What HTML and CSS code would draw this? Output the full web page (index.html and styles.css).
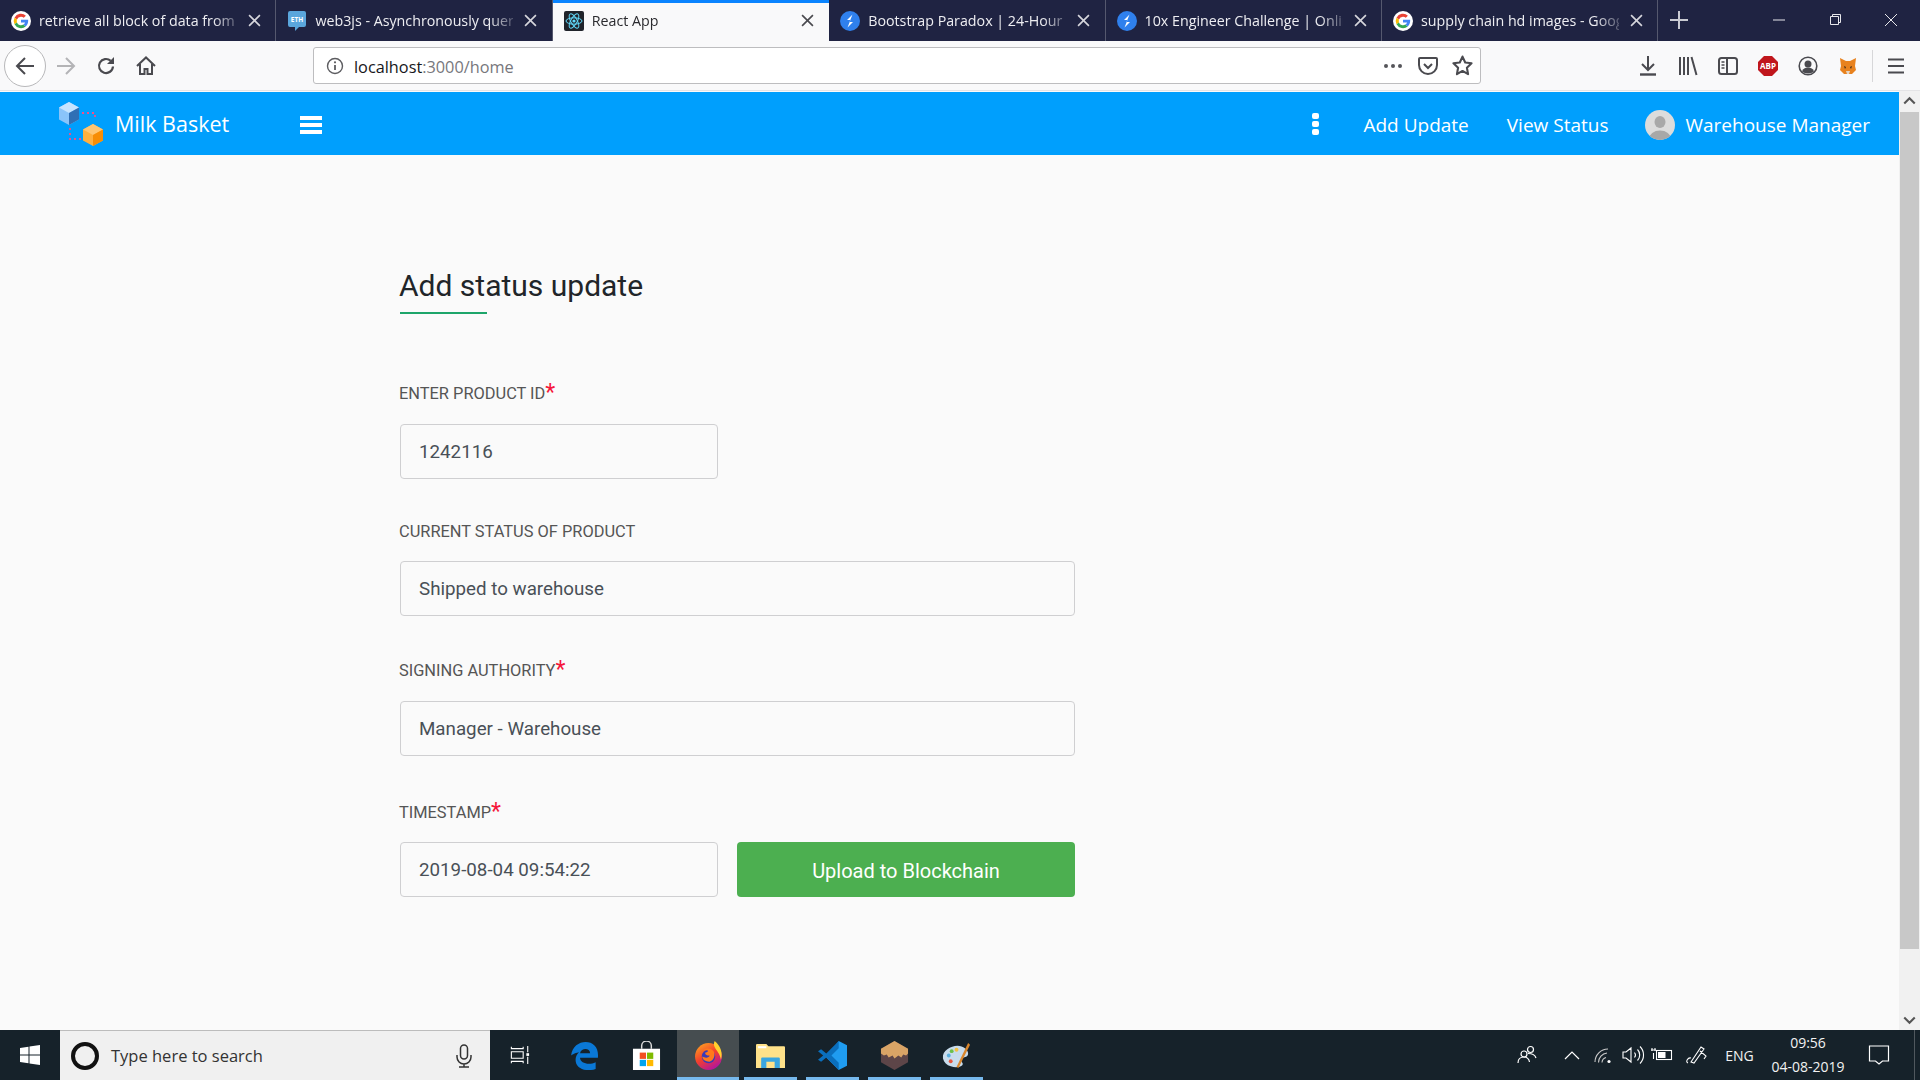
FILE: index.html
```html
<!DOCTYPE html>
<html lang="en">
    <head>
        <meta charset="UTF-8" />
        <meta name="viewport" content="width=device-width, initial-scale=1.0" />
        <title>React App</title>
        <link rel="stylesheet" href="styles.css">
    </head>
    <body>
        <svg class="defs" width="0" height="0">
            <symbol id="g-logo" viewBox="0 0 24 24">
                <circle cx="12" cy="12" r="12" fill="#fff"/>
                <path d="M12 7a5 5 0 0 1 3.3 1.2l2.6-2.6A8.8 8.8 0 0 0 4.2 8l3 2.300A5 5 0 0 1 12 7z" fill="#ea4335"/>
                <path d="M4.200 8a8.800 8.800 0 0 0 0 8l3-2.300a5 5 0 0 1 0-3.400z" fill="#fbbc05"/>
                <path d="M4.200 16a8.800 8.800 0 0 0 13.500 2.600l-2.900-2.300A5 5 0 0 1 7.200 13.700z" fill="#34a853"/>
                <path d="M20.600 10.400H12v3.500h4.900a4.300 4.300 0 0 1-2.100 2.400l2.900 2.300c1.800-1.700 2.900-4.100 2.900-6.900 0-.5 0-1.200 0-1.300z" fill="#4285f4"/>
            </symbol>
            <symbol id="bolt" viewBox="0 0 20 20">
                <circle cx="10" cy="10" r="10" fill="#2f80ed"/>
                <path d="M12.500 3.500 7 9h3.500L7.500 16.500 13 11H9.500z" fill="#fff"/>
            </symbol>
            <symbol id="close" viewBox="0 0 12 12">
                <path d="M1 1l10 10M11 1 1 11" fill="none" stroke="currentColor" stroke-width="1.500"/>
            </symbol>
        </svg>

        <div class="tabbar">
            <div class="tab">
                <svg class="favicon"><use href="#g-logo"/></svg>
                <span class="tab-title">retrieve all block of data from</span>
                <svg class="tab-close"><use href="#close"/></svg>
            </div>
            <div class="tab">
                <svg class="favicon" viewBox="0 0 18 20">
                    <path d="M2 0h14a2 2 0 0 1 2 2v12a2 2 0 0 1-2 2h-5l-4 4v-4H2a2 2 0 0 1-2-2V2a2 2 0 0 1 2-2z" fill="#5aa6dc"/>
                    <text x="9" y="10.500" class="eth-text" text-anchor="middle">ETH</text>
                </svg>
                <span class="tab-title">web3js - Asynchronously query</span>
                <svg class="tab-close"><use href="#close"/></svg>
            </div>
            <div class="tab tab-active">
                <svg class="favicon" viewBox="0 0 20 20">
                    <rect width="20" height="20" rx="2" fill="#20232a"/>
                    <g fill="none" stroke="#61dafb" stroke-width="1">
                        <ellipse cx="10" cy="10" rx="8" ry="3.200"/>
                        <ellipse cx="10" cy="10" rx="8" ry="3.200" transform="rotate(60 10 10)"/>
                        <ellipse cx="10" cy="10" rx="8" ry="3.200" transform="rotate(120 10 10)"/>
                    </g>
                    <circle cx="10" cy="10" r="1.600" fill="#61dafb"/>
                </svg>
                <span class="tab-title">React App</span>
                <svg class="tab-close"><use href="#close"/></svg>
            </div>
            <div class="tab">
                <svg class="favicon"><use href="#bolt"/></svg>
                <span class="tab-title">Bootstrap Paradox | 24-Hour H</span>
                <svg class="tab-close"><use href="#close"/></svg>
            </div>
            <div class="tab">
                <svg class="favicon"><use href="#bolt"/></svg>
                <span class="tab-title">10x Engineer Challenge | Onlin</span>
                <svg class="tab-close"><use href="#close"/></svg>
            </div>
            <div class="tab">
                <svg class="favicon"><use href="#g-logo"/></svg>
                <span class="tab-title">supply chain hd images - Goog</span>
                <svg class="tab-close"><use href="#close"/></svg>
            </div>
            <svg class="new-tab" viewBox="0 0 18 18"><path d="M9 0v18M0 9h18" stroke="#c9cad2" stroke-width="2"/></svg>
            <div class="win-btns">
                <svg class="win-btn" viewBox="0 0 46 14"><path d="M17 7h12" stroke="#e8e8ec" stroke-width="1"/></svg>
                <svg class="win-btn" viewBox="0 0 46 14"><path d="M18.500 3.500h8v8h-8zM20.500 3.500v-2h8v8h-2" fill="none" stroke="#e8e8ec" stroke-width="1"/></svg>
                <svg class="win-btn" viewBox="0 0 46 14"><path d="M17 1l12 12M29 1 17 13" stroke="#e8e8ec" stroke-width="1"/></svg>
            </div>
        </div>

        <div class="toolbar">
            <div class="back-btn">
                <svg class="tool-icon" viewBox="0 0 20 20"><path d="M19 10H2M10 2l-8 8 8 8" fill="none" stroke="#4a4a4f" stroke-width="2"/></svg>
            </div>
            <div class="tool-slot">
                <svg class="tool-icon" viewBox="0 0 20 20"><path d="M1 10h17M10 2l8 8-8 8" fill="none" stroke="#b4b4b6" stroke-width="2"/></svg>
            </div>
            <div class="tool-slot">
                <svg class="tool-icon" viewBox="0 0 20 20"><path d="M17 10.500a7 7 0 1 1-2.300-5.700" fill="none" stroke="#4a4a4f" stroke-width="2.200"/><path d="M18 1v7h-7z" fill="#4a4a4f"/></svg>
            </div>
            <div class="tool-slot">
                <svg class="tool-icon" viewBox="0 0 20 20"><path d="M1 10 10 1.500 19 10M4 8v10h4.500v-5h3v5H16V8" fill="none" stroke="#4a4a4f" stroke-width="2"/></svg>
            </div>
            <div class="urlbar">
                <svg class="url-info" viewBox="0 0 18 18"><circle cx="9" cy="9" r="7.500" fill="none" stroke="#5c5c60" stroke-width="1.400"/><path d="M9 8v5" stroke="#5c5c60" stroke-width="1.800"/><circle cx="9" cy="5.300" r="1.100" fill="#5c5c60"/></svg>
                <span class="url-text">localhost<span class="url-dim">:3000/home</span></span>
                <svg class="url-dots" viewBox="0 0 20 6"><circle cx="3" cy="3" r="2" fill="#55555a"/><circle cx="10" cy="3" r="2" fill="#55555a"/><circle cx="17" cy="3" r="2" fill="#55555a"/></svg>
                <svg class="url-pocket" viewBox="0 0 20 20"><path d="M2 2h16a1 1 0 0 1 1 1v6a9 9 0 0 1-18 0V3a1 1 0 0 1 1-1z" fill="none" stroke="#4a4a4f" stroke-width="2"/><path d="M6 8l4 4 4-4" fill="none" stroke="#4a4a4f" stroke-width="2"/></svg>
                <svg class="url-star" viewBox="0 0 20 20"><path d="M10 1.500l2.600 5.600 6 .8-4.400 4.200 1.100 6.100-5.300-3-5.300 3 1.100-6.100L1.400 7.900l6-.8z" fill="none" stroke="#4a4a4f" stroke-width="2" stroke-linejoin="round"/></svg>
            </div>
            <div class="tool-right">
                <div class="tool-slot">
                    <svg class="tool-icon" viewBox="0 0 20 20"><path d="M10 0v13M4 8l6 6 6-6" fill="none" stroke="#4a4a4f" stroke-width="2"/><path d="M2 18.500h16" stroke="#4a4a4f" stroke-width="2.400"/></svg>
                </div>
                <div class="tool-slot">
                    <svg class="tool-icon" viewBox="0 0 20 20"><path d="M2 1v18M6 1v18M10 1v18M13.500 1l5 18" fill="none" stroke="#4a4a4f" stroke-width="2"/></svg>
                </div>
                <div class="tool-slot">
                    <svg class="tool-icon" viewBox="0 0 20 20"><rect x="1" y="2" width="18" height="16" rx="2.500" fill="none" stroke="#4a4a4f" stroke-width="2"/><path d="M9 2v16" stroke="#4a4a4f" stroke-width="2"/><path d="M3.500 6h3M3.500 9h3M3.500 12h3" stroke="#4a4a4f" stroke-width="1.400"/></svg>
                </div>
                <div class="tool-slot">
                    <svg class="tool-icon" viewBox="0 0 20 20">
                        <path d="M6 0h8l6 6v8l-6 6H6l-6-6V6z" fill="#c0161c"/>
                        <text x="10" y="13" class="abp-text" text-anchor="middle">ABP</text>
                    </svg>
                </div>
                <div class="tool-slot">
                    <svg class="tool-icon" viewBox="0 0 20 20"><circle cx="10" cy="10" r="8.800" fill="none" stroke="#4a4a4f" stroke-width="1.600"/><circle cx="10" cy="8" r="3.500" fill="#4a4a4f"/><path d="M4 15.500c1-3 3-4 6-4s5 1 6 4c-3 2.500-9 2.500-12 0z" fill="#4a4a4f"/></svg>
                </div>
                <div class="tool-slot">
                    <svg class="tool-icon" viewBox="0 0 20 20">
                        <path d="M2 2l6 3h4l6-3-1 8 1 4-4 4h-8l-4-4 1-4z" fill="#e8821e"/>
                        <path d="M6 10l2 1-1 2zM14 10l-2 1 1 2z" fill="#3a2a1a"/>
                        <path d="M8 15h4l-1 3H9z" fill="#e4d5c4"/>
                    </svg>
                </div>
                <span class="tool-sep"></span>
                <div class="tool-slot">
                    <svg class="tool-icon" viewBox="0 0 20 20"><path d="M2 3.500h16M2 10h16M2 16.500h16" stroke="#4a4a4f" stroke-width="2.200"/></svg>
                </div>
            </div>
        </div>

        <div class="viewport">
            <div class="page">
                <nav class="navbar">
                    <svg class="logo" viewBox="0 0 45 44">
                        <path d="M10 0l10 5.500v12L10 23 0 17.500v-12z" fill="#8ac4fa"/>
                        <path d="M10 0l10 5.500L10 11 0 5.500z" fill="#c6e4ff"/>
                        <path d="M10 11l10-5.500v12L10 23z" fill="#2f6fb5"/>
                        <path d="M34 22l10 5.500v11L34 44l-10-5.500v-11z" fill="#ffb03f"/>
                        <path d="M34 22l10 5.500L34 33l-10-5.500z" fill="#ffc673"/>
                        <path d="M34 33l10-5.500v11L34 44z" fill="#f78d05"/>
                        <path d="M23 11h13v7M11 26v11h11" fill="none" stroke="#f0508a" stroke-width="1.800" stroke-dasharray="2 3"/>
                    </svg>
                    <span class="brand">Milk Basket</span>
                    <span class="burger"><i></i><i></i><i></i></span>
                    <span class="kebab"><i></i><i></i><i></i></span>
                    <a class="nav-link nav-add">Add Update</a>
                    <a class="nav-link nav-view">View Status</a>
                    <svg class="avatar" viewBox="0 0 30 30">
                        <defs><clipPath id="av"><ellipse cx="15" cy="15" rx="15" ry="15"/></clipPath></defs>
                        <circle cx="15" cy="15" r="15" fill="#dcdcdc"/>
                        <g clip-path="url(#av)" fill="#a8a8a8">
                            <ellipse cx="15" cy="12" rx="5.500" ry="6"/>
                            <ellipse cx="15" cy="29" rx="11" ry="8.500"/>
                        </g>
                    </svg>
                    <a class="nav-link">Warehouse Manager</a>
                </nav>

                <form class="status-form">
                    <h2 class="form-title">Add status update</h2>
                    <div class="title-rule"></div>

                    <label class="field-label label-id">ENTER PRODUCT ID<span class="req">*</span></label>
                    <input class="field field-short" type="text" value="1242116">

                    <label class="field-label label-status">CURRENT STATUS OF PRODUCT</label>
                    <input class="field" type="text" value="Shipped to warehouse">

                    <label class="field-label">SIGNING AUTHORITY<span class="req">*</span></label>
                    <input class="field" type="text" value="Manager - Warehouse">

                    <label class="field-label label-time">TIMESTAMP<span class="req">*</span></label>
                    <div class="field-row">
                        <input class="field field-short" type="text" value="2019-08-04 09:54:22">
                        <button class="upload-btn" type="button">Upload to Blockchain</button>
                    </div>
                </form>
            </div>

            <div class="scrollbar">
                <svg class="scroll-arrow" viewBox="0 0 20 20"><path d="M5 12l5-5 5 5" fill="none" stroke="#555" stroke-width="2"/></svg>
                <div class="scroll-track"><div class="scroll-thumb"></div></div>
                <svg class="scroll-arrow" viewBox="0 0 20 20"><path d="M5 8l5 5 5-5" fill="none" stroke="#555" stroke-width="2"/></svg>
            </div>
        </div>

        <div class="taskbar">
            <div class="start">
                <svg class="win-logo" viewBox="0 0 20 20"><path d="M0 3l8.500-1.200V9.500H0zM9.500 1.600 20 0v9.500H9.500zM0 10.500h8.500v7.700L0 17zM9.500 10.500H20V20L9.500 18.400z" fill="#fff"/></svg>
            </div>
            <div class="search">
                <span class="cortana"></span>
                <span class="search-text">Type here to search</span>
                <svg class="mic" viewBox="0 0 16 24"><rect x="4.500" y="1" width="7" height="14" rx="3.500" fill="none" stroke="#333" stroke-width="1.500"/><path d="M1 11v2a7 7 0 0 0 14 0v-2M8 20v3M3 23h10" fill="none" stroke="#333" stroke-width="1.500"/></svg>
            </div>
            <div class="task-view">
                <svg class="task-icon" viewBox="0 0 22 20"><path d="M1.500 1v2h13V1M1.500 19v-2h13v2M1.500 6.500h13v7h-13zM19.500 0v7M19.500 12v8" fill="none" stroke="#fff" stroke-width="1.200"/><rect x="18" y="8" width="3" height="3" fill="#fff"/></svg>
            </div>
            <div class="app">
                <svg class="app-icon" viewBox="0 0 26 26"><path d="M1 13C2 5 8 1 14 1c7 0 12 5 11 14H9c0 5 8 7 14 4v6c-8 3-18 0-18-8 0-3 1-5 3-7 0 0-5 1-7 3zm8-2h9c0-5-8-5-9 0z" fill="#0a78d6"/></svg>
            </div>
            <div class="app">
                <svg class="app-icon store-icon" viewBox="0 0 30 30">
                    <path d="M10 8V5a5 5 0 0 1 10 0v3" fill="none" stroke="#ddd" stroke-width="1.500"/>
                    <rect x="1" y="8" width="28" height="22" fill="#fff"/>
                    <rect x="8" y="12" width="6.500" height="6.500" fill="#f25022"/>
                    <rect x="15.500" y="12" width="6.500" height="6.500" fill="#7fba00"/>
                    <rect x="8" y="19.500" width="6.500" height="6.500" fill="#00a4ef"/>
                    <rect x="15.500" y="19.500" width="6.500" height="6.500" fill="#ffb900"/>
                </svg>
            </div>
            <div class="app app-active">
                <svg class="app-icon" viewBox="0 0 28 28">
                    <defs>
                        <linearGradient id="ff" x1="0" y1="0" x2="0.600" y2="1"><stop offset="0" stop-color="#ffb01f"/><stop offset="0.550" stop-color="#f3402c"/><stop offset="1" stop-color="#b5169a"/></linearGradient>
                    </defs>
                    <circle cx="14" cy="15" r="13" fill="url(#ff)"/>
                    <path d="M20 0c6 5 8 12 6 18-1-6-4-8-6-12-1-2-1-4 0-6z" fill="#ffd02e"/>
                    <circle cx="14" cy="15" r="6.500" fill="#3a3ab8"/>
                    <path d="M9 9c3-3 8-2 10 1 2 4 0 9-4 10-4 0-7-2-7-5 3 2 7 1 7-1-2 0-5-1-4-3 2 0 3-1 2-2-2 0-3 0-4 0z" fill="#ff7a1c"/>
                </svg>
            </div>
            <div class="app">
                <svg class="app-icon" viewBox="0 0 28 26">
                    <path d="M0 3a1 1 0 0 1 1-1h9l2 2h15a1 1 0 0 1 1 1v20H0z" fill="#ffe28a"/>
                    <path d="M2 4h8v2H2z" fill="#fff"/>
                    <path d="M5 25v-9a1 1 0 0 1 1-1h16a1 1 0 0 1 1 1v9h-5v-6h-8v6z" fill="#3aa6e0"/>
                </svg>
            </div>
            <div class="app">
                <svg class="app-icon" viewBox="0 0 28 28">
                    <path d="M20 0l8 4v20l-8 4L8 16l12-16z" fill="#1f9cf0"/>
                    <path d="M20 0 8 12 3 8 0 10l5 4-5 4 3 2 5-4 12 12v-7l-7-7 7-7z" fill="#0a6fbd"/>
                </svg>
            </div>
            <div class="app">
                <svg class="app-icon" viewBox="0 0 28 30">
                    <path d="M14 0l14 8v14l-14 8-14-8V8z" fill="#5d4548"/>
                    <path d="M14 0l14 8v5l-2 2-3-1-2 3-3-2-4 3-2-3-4 2-2-3-3 1-3-2V8z" fill="#d9a466"/>
                </svg>
            </div>
            <div class="app">
                <svg class="app-icon" viewBox="0 0 30 28">
                    <path d="M1 17C0 9 9 4 16 4c6 0 11 4 11 8 0 5-6 3-7 6s3 4 1 6-7 3-12 1c-4-1-7-4-8-8z" fill="#c8dcec"/>
                    <circle cx="7" cy="14" r="2" fill="#5ab0e0"/>
                    <circle cx="10" cy="9.500" r="2" fill="#6cc04a"/>
                    <circle cx="15" cy="8" r="2" fill="#f5c242"/>
                    <circle cx="9" cy="20" r="2" fill="#e8553d"/>
                    <path d="M27 1l2 2-12 24-2-1z" fill="#d9862c"/>
                </svg>
            </div>
            <div class="tray">
                <svg class="tray-people" viewBox="0 0 20 20"><circle cx="7" cy="9" r="3" fill="none" stroke="#fff" stroke-width="1.200"/><circle cx="13.500" cy="4.500" r="3" fill="none" stroke="#fff" stroke-width="1.200"/><path d="M1 18c0-4 2-6 6-6s5 2 5.500 5M11 8.500c4 0 7 1 8 4.500" fill="none" stroke="#fff" stroke-width="1.200"/></svg>
                <svg class="tray-slot tray-caret" viewBox="0 0 30 20"><path d="M8 14l7-7 7 7" fill="none" stroke="#fff" stroke-width="1.200"/></svg>
                <svg class="tray-slot" viewBox="0 0 30 20"><path d="M8 17A13 13 0 0 1 21 4M11.500 17.500A9.500 9.500 0 0 1 20 8M15 17.500a5.500 5.500 0 0 1 4-5" fill="none" stroke="#ccc" stroke-width="1.100"/><circle cx="22" cy="16.500" r="1.600" fill="#fff"/></svg>
                <svg class="tray-slot" viewBox="0 0 30 20"><path d="M6 7h3l5-4v14l-5-4H6zM17.500 7.500a4 4 0 0 1 0 5M20.500 4.500a8 8 0 0 1 0 11M23 1.500a12 12 0 0 1 0 17" fill="none" stroke="#fff" stroke-width="1.100"/></svg>
                <svg class="tray-slot" viewBox="0 0 30 20"><rect x="9.500" y="5.500" width="15" height="9" fill="none" stroke="#fff" stroke-width="1.100"/><rect x="11" y="7" width="7.500" height="6" fill="#fff"/><path d="M4 5h5M5 3v3M8 3v3M6.500 8v6" stroke="#fff" stroke-width="1.100" fill="none"/></svg>
                <svg class="tray-slot tray-pen" viewBox="0 0 30 20"><path d="M6 18c-3-1 0-6 3-5M9 17 19 2l3 2-10 14zM18 6l6 5-2 3" fill="none" stroke="#fff" stroke-width="1.100"/></svg>
                <span class="tray-lang">ENG</span>
                <div class="clock"><span>09:56</span><span>04-08-2019</span></div>
                <svg class="tray-notify" viewBox="0 0 22 20"><path d="M1.500 1h19v15h-6l-3.500 3-3.500-3h-6z" fill="none" stroke="#fff" stroke-width="1.200"/></svg>
                <span class="show-desktop"></span>
            </div>
        </div>
    </body>
</html>
```

FILE: styles.css
```css
html, body {
    margin: 0;
    height: 100%;
    overflow: hidden;
}
body {
    width: 1920px;
    height: 1080px;
    display: flex;
    flex-direction: column;
    background: #fafafa;
    font-family: Roboto, sans-serif;
}
.defs {
    position: absolute;
}

/* browser tabs */
.tabbar {
    height: 41px;
    display: flex;
    align-items: stretch;
    background: #1f2342;
    flex-shrink: 0;
}
.tab {
    width: 276.400px;
    box-sizing: border-box;
    border-right: 1px solid #55586e;
    display: flex;
    align-items: center;
    padding-left: 11px;
    color: #eeeef2;
    font: 14.250px "Open Sans", sans-serif;
}
.favicon {
    width: 20px;
    height: 20px;
    flex-shrink: 0;
}
.eth-text {
    font: bold 6.500px "Open Sans", sans-serif;
    fill: #fff;
}
.tab-title {
    width: 198px;
    margin-left: 8px;
    white-space: nowrap;
    -webkit-mask-image: linear-gradient(to right, #000 88%, rgba(0, 0, 0, 0.25));
    mask-image: linear-gradient(to right, #000 88%, rgba(0, 0, 0, 0.25));
}
.tab-close {
    width: 13px;
    height: 13px;
    margin-left: 11px;
    color: #d6d6dc;
}
.tab-active {
    background: #f9f9fa;
    color: #2a2a2e;
    border-right: 0;
    box-shadow: inset 0 3px #0a84ff;
}
.tab-active .tab-close {
    color: #4a4a4f;
}
.new-tab {
    width: 18px;
    height: 18px;
    margin: 11px 0 0 12px;
}
.win-btns {
    margin-left: auto;
    display: flex;
    padding-right: 1px;
}
.win-btn {
    width: 46px;
    height: 14px;
    margin: 13px 5px 0;
}

/* browser toolbar */
.toolbar {
    height: 50px;
    box-sizing: border-box;
    display: flex;
    align-items: center;
    background: #f9f9fa;
    padding-left: 4px;
    flex-shrink: 0;
    border-bottom: 1px solid #e4e4e6;
}
.back-btn {
    width: 40px;
    height: 40px;
    border: 1px solid #b8b8ba;
    border-radius: 50%;
    background: #fff;
    display: flex;
    align-items: center;
    justify-content: center;
}
.tool-slot {
    width: 40px;
    height: 40px;
    display: flex;
    align-items: center;
    justify-content: center;
}
.tool-icon {
    width: 20px;
    height: 20px;
}
.urlbar {
    width: 1168px;
    height: 37px;
    margin-left: 147px;
    box-sizing: border-box;
    border: 1px solid #bdbdbf;
    border-radius: 3px;
    background: #fff;
    display: flex;
    align-items: center;
    padding-left: 12px;
}
.url-info {
    width: 18px;
    height: 18px;
}
.url-text {
    margin: 2px 0 0 10px;
    font: 16.300px "Open Sans", sans-serif;
    color: #16161a;
}
.url-dim {
    color: #77777c;
}
.url-dots {
    width: 20px;
    height: 6px;
    margin-left: auto;
}
.url-pocket {
    width: 20px;
    height: 20px;
    margin-left: 15px;
}
.url-star {
    width: 21px;
    height: 21px;
    margin: 0 7px 0 14px;
}
.tool-right {
    margin-left: 147px;
    display: flex;
    align-items: center;
}
.tool-sep {
    width: 1px;
    height: 32px;
    margin: 0 3px 0 4px;
    background: #d7d7d9;
}
.abp-text {
    font: bold 8px "Open Sans", sans-serif;
    fill: #fff;
}

/* page area */
.viewport {
    flex: 1;
    display: flex;
    min-height: 0;
}
.page {
    flex: 1;
    min-width: 0;
}
.navbar {
    height: 63px;
    margin-top: 1px;
    display: flex;
    align-items: center;
    background: #009ffd;
    color: #fff;
    padding-left: 59px;
}
.logo {
    width: 45px;
    height: 44px;
}
.brand {
    margin-left: 11px;
    font: 21.500px "Open Sans", sans-serif;
}
.burger {
    width: 22px;
    margin: 2px 0 0 71px;
    display: flex;
    flex-direction: column;
    gap: 3px;
}
.burger i {
    height: 4px;
    background: #fff;
}
.kebab {
    margin-left: auto;
    display: flex;
    flex-direction: column;
    gap: 2px;
}
.kebab i {
    width: 7px;
    height: 6px;
    border-radius: 2px;
    background: #fff;
}
.nav-link {
    padding-top: 2px;
    font: 19px "Open Sans", sans-serif;
    white-space: nowrap;
}
.nav-add {
    margin-left: 44px;
}
.nav-view {
    margin-left: 38px;
}
.avatar {
    width: 30px;
    height: 30px;
    margin: 3px 10px 0 37px;
}
.navbar .nav-link:last-child {
    margin-right: 29px;
}

/* form */
.status-form {
    padding: 0 0 0 400px;
    width: 675px;
}
.form-title {
    margin: 107px 0 0 -1px;
    font: 400 30px/48px Roboto, sans-serif;
    color: #212529;
}
.title-rule {
    width: 87px;
    height: 2px;
    margin-top: 2px;
    background: #1da56a;
}
.field-label {
    display: block;
    margin: 42px 0 17px -1px;
    font: 16.400px/26px Roboto, sans-serif;
    color: #555;
}
.label-id {
    margin-top: 67px;
}
.label-status {
    margin-top: 40px;
    margin-bottom: 16px;
}
.label-time {
    margin-top: 44px;
    margin-bottom: 16px;
}
.req {
    color: #f5163b;
    font-size: 23px;
    line-height: 16px;
    vertical-align: -1px;
}
.field {
    display: block;
    width: 100%;
    height: 55px;
    box-sizing: border-box;
    border: 1px solid #cfcfd1;
    border-radius: 4px;
    background: #fafafa;
    padding: 0 18px;
    font: 18.750px Roboto, sans-serif;
    color: #495057;
}
.field-short {
    width: 318px;
}
.field-row {
    display: flex;
    gap: 19px;
}
.upload-btn {
    width: 338px;
    height: 55px;
    border: 0;
    border-radius: 4px;
    padding-top: 3px;
    background: #4caf50;
    color: #fff;
    font: 20px Roboto, sans-serif;
}

/* scrollbar */
.scrollbar {
    width: 21px;
    background: #f1f1f1;
    display: flex;
    flex-direction: column;
    flex-shrink: 0;
}
.scroll-arrow {
    width: 21px;
    height: 21px;
    flex-shrink: 0;
}
.scroll-track {
    flex: 1;
}
.scroll-thumb {
    width: 19px;
    height: 837px;
    margin-left: 1px;
    background: #c8c8c8;
}

/* windows taskbar */
.taskbar {
    height: 50px;
    flex-shrink: 0;
    display: flex;
    background: #16222a;
}
.start {
    width: 60px;
    display: flex;
    align-items: center;
    justify-content: center;
}
.win-logo {
    width: 20px;
    height: 20px;
}
.search {
    width: 430px;
    box-sizing: border-box;
    background: #f0f0f0;
    border-top: 1px solid #bcbcbc;
    display: flex;
    align-items: center;
    padding-left: 11px;
}
.cortana {
    width: 20px;
    height: 20px;
    border: 4px solid #111;
    border-radius: 50%;
}
.search-text {
    margin-left: 12px;
    font: 16.500px "Open Sans", sans-serif;
    color: #333;
}
.mic {
    width: 16px;
    height: 24px;
    margin-left: auto;
    margin-right: 18px;
}
.task-view {
    width: 63px;
    box-sizing: border-box;
    padding-right: 4px;
    display: flex;
    align-items: center;
    justify-content: center;
}
.task-icon {
    width: 20px;
    height: 20px;
}
.app {
    width: 62px;
    display: flex;
    align-items: center;
    justify-content: center;
    box-sizing: border-box;
    border-bottom: 3px solid transparent;
}
.app:nth-child(n+6) {
    border-image: linear-gradient(to right, transparent 6px, #76b9ed 6px, #76b9ed calc(100% - 5px), transparent calc(100% - 5px)) 1;
}
.app-active {
    background: #464d50;
    border-image: none !important;
    border-bottom-color: #76b9ed;
}
.app-icon {
    width: 29px;
    height: 29px;
    margin-top: 3px;
}
.tray {
    margin-left: auto;
    display: flex;
    align-items: center;
    color: #f2f2f2;
    font: 14px "Open Sans", sans-serif;
}
.tray-people {
    width: 20px;
    height: 20px;
    margin-right: 20px;
}
.tray-slot {
    width: 30px;
    height: 20px;
}
.tray-pen {
    margin-left: 5px;
}
.tray-lang {
    width: 45px;
    margin-left: 5px;
    text-align: center;
}
.clock {
    width: 86px;
    margin-left: 3px;
    display: flex;
    flex-direction: column;
    align-items: center;
    line-height: 24px;
}
.tray-notify {
    width: 22px;
    height: 20px;
    margin: 0 24px 0 17px;
}
.show-desktop {
    width: 1px;
    height: 50px;
    margin-right: 5px;
    background: #50585e;
}
```
